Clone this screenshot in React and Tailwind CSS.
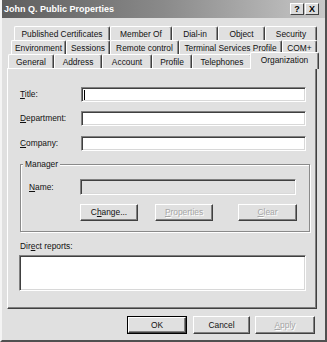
const row1 = [
  ["Published Certificates", "w-[96px]"],
  ["Member Of", "w-[62px]"],
  ["Dial-in", "w-[46px]"],
  ["Object", "w-[47px]"],
  ["Security", "w-[52px]"],
];
const row2 = [
  ["Environment", "w-[55px]"],
  ["Sessions", "w-[44px]"],
  ["Remote control", "w-[69px]"],
  ["Terminal Services Profile", "w-[103px]"],
  ["COM+", "w-[35px]"],
];
const row3 = [
  ["General", "w-[46px]"],
  ["Address", "w-[48px]"],
  ["Account", "w-[50px]"],
  ["Profile", "w-[40px]"],
  ["Telephones", "w-[60px]"],
];

function Tab({ label, w }) {
  return (
    <div
      className={`${w} h-[14px] shrink-0 flex items-center justify-center rounded-t-[2px] border-t border-l border-r border-t-white border-l-white border-r-[#404040] shadow-[inset_-1px_0_0_#8c8c8c] whitespace-nowrap leading-none pt-[1px]`}
    >
      {label}
    </div>
  );
}

function U({ children }) {
  return <span className="underline underline-offset-[1px] decoration-[1px]">{children}</span>;
}

function Field({ w, h = "h-[15px]", disabled, caret }) {
  return (
    <div
      className={`${w} ${h} ${disabled ? "bg-[#e0e0e0]" : "bg-white"} flex items-center border border-t-[#808080] border-l-[#808080] border-r-white border-b-white shadow-[inset_1px_1px_0_#404040,inset_-1px_-1px_0_#d8d8d8]`}
    >
      {caret ? <div className="ml-[2px] w-[1px] h-[10px] bg-black" /> : null}
    </div>
  );
}

function Btn({ w, h = "h-[17px]", disabled, children }) {
  return (
    <div
      className={`${w} ${h} shrink-0 flex items-center justify-center border border-t-white border-l-white border-r-[#404040] border-b-[#404040] shadow-[inset_-1px_-1px_0_#808080] leading-none ${disabled ? "text-[#a6a6a6] [text-shadow:1px_1px_0_#ffffff]" : ""}`}
    >
      {children}
    </div>
  );
}

export default function App() {
  return (
    <div className="w-[327px] h-[342px] overflow-hidden bg-[#e0e0e0] flex flex-col border-l-2 border-r-2 border-b-2 border-l-[#f4f4f4] border-r-[#505050] border-b-[#505050] font-['Liberation_Sans',Arial,sans-serif] text-[8.4px] text-[#111]">
      {/* Title bar */}
      <div className="h-[18px] shrink-0 flex items-center justify-between pl-[2px] pr-[6px] bg-gradient-to-r from-[#5e5e5e] via-[#8a8a8a] to-[#c8c8c8]">
        <span className="text-white font-bold text-[9px] leading-none">John Q. Public Properties</span>
        <div className="flex gap-[1px]">
          <div className="w-[14px] h-[12px] flex items-center justify-center bg-[#dcdcdc] border border-t-white border-l-white border-r-[#404040] border-b-[#404040] font-bold text-[9px] leading-none text-black">
            ?
          </div>
          <div className="w-[14px] h-[12px] flex items-center justify-center bg-[#dcdcdc] border border-t-white border-l-white border-r-[#404040] border-b-[#404040] font-bold text-[9px] leading-none text-black">
            X
          </div>
        </div>
      </div>

      {/* Tabs + panel */}
      <div className="mt-[8px] pl-[5px] flex flex-col">
        <div className="flex ml-[7px]">
          {row1.map(([l, w]) => (
            <Tab key={l} label={l} w={w} />
          ))}
        </div>
        <div className="flex ml-[4px]">
          {row2.map(([l, w]) => (
            <Tab key={l} label={l} w={w} />
          ))}
        </div>
        <div className="flex ml-[1px] h-[14px]">
          {row3.map(([l, w]) => (
            <Tab key={l} label={l} w={w} />
          ))}
          <div className="relative z-10 w-[69px] h-[17px] -ml-[2px] -mt-[2px] shrink-0 flex items-center justify-center rounded-t-[2px] bg-[#e0e0e0] border-t border-l border-r border-t-white border-l-white border-r-[#404040] shadow-[inset_-1px_0_0_#8c8c8c] leading-none pb-[2px]">
            Organization
          </div>
        </div>

        {/* Panel */}
        <div className="w-[310px] h-[241px] border border-t-white border-l-white border-r-[#404040] border-b-[#404040] shadow-[inset_-1px_-1px_0_#808080] flex flex-col pl-[12px] pt-[18px]">
          <div className="flex items-center h-[15px]">
            <span className="w-[61px] leading-none">
              <U>T</U>itle:
            </span>
            <Field w="w-[225px]" caret />
          </div>
          <div className="flex items-center h-[15px] mt-[9px]">
            <span className="w-[61px] leading-none">
              <U>D</U>epartment:
            </span>
            <Field w="w-[225px]" />
          </div>
          <div className="flex items-center h-[15px] mt-[10px]">
            <span className="w-[61px] leading-none">
              <U>C</U>ompany:
            </span>
            <Field w="w-[225px]" />
          </div>

          {/* Manager group */}
          <div className="relative mt-[13px] w-[290px] border border-[#8a8a8a] shadow-[inset_1px_1px_0_#ffffff,1px_1px_0_#ffffff] pl-[8px] pt-[14px] pb-[10px] flex flex-col">
            <span className="absolute left-[2px] -top-[6px] px-[2px] bg-[#e0e0e0] leading-[10px]">Manager</span>
            <div className="flex items-center h-[16px]">
              <span className="w-[51px] leading-none">
                <U>N</U>ame:
              </span>
              <Field w="w-[216px]" h="h-[16px]" disabled />
            </div>
            <div className="flex mt-[9px] ml-[51px]">
              <Btn w="w-[58px]">
                C<U>h</U>ange...
              </Btn>
              <div className="ml-[17px]">
                <Btn w="w-[58px]" disabled>
                  <U>P</U>roperties
                </Btn>
              </div>
              <div className="ml-[25px]">
                <Btn w="w-[59px]" disabled>
                  <U>C</U>lear
                </Btn>
              </div>
            </div>
          </div>

          <div className="mt-[9px] h-[10px] leading-[10px]">
            Dir<U>e</U>ct reports:
          </div>
          <div className="mt-[4px] -ml-[1px] w-[287px] h-[36px] bg-white border border-t-[#808080] border-l-[#808080] border-r-white border-b-white shadow-[inset_1px_1px_0_#404040,inset_-1px_-1px_0_#d8d8d8]" />
        </div>
      </div>

      {/* Bottom buttons */}
      <div className="mt-[7px] flex justify-end pr-[10px]">
        <div className="w-[60px] h-[18px] border border-black flex">
          <div className="flex-1 flex items-center justify-center border border-t-white border-l-white border-r-[#404040] border-b-[#404040] shadow-[inset_-1px_-1px_0_#808080] leading-none">
            OK
          </div>
        </div>
        <div className="ml-[6px]">
          <Btn w="w-[57px]" h="h-[18px]">
            Cancel
          </Btn>
        </div>
        <div className="ml-[5px]">
          <Btn w="w-[60px]" h="h-[18px]" disabled>
            <U>A</U>pply
          </Btn>
        </div>
      </div>
    </div>
  );
}
